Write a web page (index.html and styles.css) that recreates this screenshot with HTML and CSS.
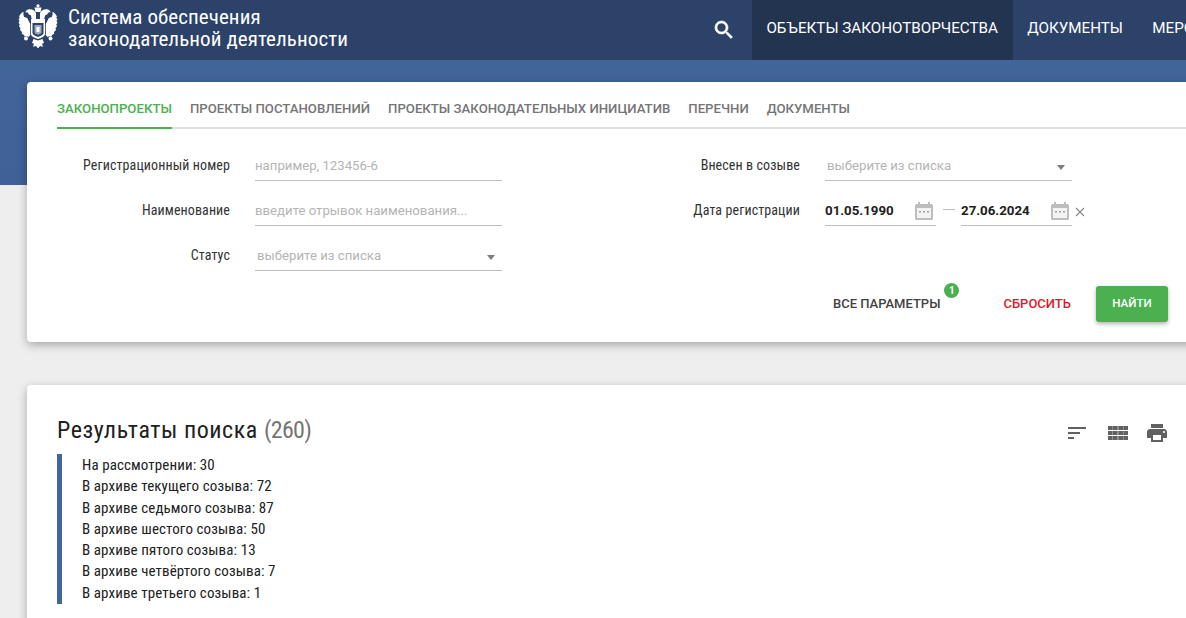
FILE: index.html
```html
<!DOCTYPE html>
<html lang="ru">
<head>
<meta charset="utf-8">
<title>Система обеспечения законодательной деятельности</title>
<link rel="stylesheet" href="styles.css">
</head>
<body>
<header class="topbar">
  <svg class="emblem" viewBox="0 0 40 44" width="40" height="44" fill="#fff">
    <circle cx="20" cy="1.8" r="1.6"/>
    <path d="M16.500 3.500h7l-1 4.500h-5z"/>
    <path d="M18 9c-1-3-5-4.500-8-3.500-1.500.5-2.500 1.800-2.500 3 1.200-.6 2.200-.3 2.500.5.500 1.500 2 2 3 2.500l.5 3 4.500 2zM22 9c1-3 5-4.500 8-3.500 1.500.5 2.500 1.800 2.500 3-1.200-.6-2.200-.3-2.500.5-.5 1.500-2 2-3 2.500l-.5 3-4.500 2z"/>
    <path d="M5 8C3 9 1.500 11 1 13l1 1-1.500 1 1 2L.5 18.500l1.200 2-.7 1.700 1.500 2-.5 1.800 2 2-.2 1.800 2.200 1.200.5 1.500 2.500-.2 1.500.8 1.700-2.100V20l-3-6-3-1c-.7-1.500-1.200-3.500-.5-5zM35 8c2 1 3.500 3 4 5l-1 1 1.500 1-1 2 1 1.500-1.200 2 .7 1.700-1.500 2 .5 1.800-2 2 .2 1.800-2.200 1.200-.5 1.500-2.500-.2-1.500.8-1.700-2.100V20l3-6 3-1c.7-1.500 1.200-3.500.5-5z"/>
    <path d="M13 15h14v15c0 2-3 4-7 5-4-1-7-3-7-5z"/>
    <path d="M14.500 19h11v10c0 1.800-3 3-5.500 4-2.500-1-5.500-2.200-5.500-4z" fill="#2c4269"/>
    <path d="M16.500 21h7v7.500c0 1-2 1.800-3.500 2.300-1.500-.5-3.500-1.300-3.500-2.300z" fill="#9fabc0"/>
    <path d="M18.500 23h3v5h-3z" fill="#fff"/>
    <circle cx="8" cy="34.500" r="2"/><circle cx="32.500" cy="34.500" r="2"/>
    <path d="M15.500 35l4.500 1.500 4.500-1.500 1.500 4-2 .8 1 3-3-.8-2 2.500-2-2.500-3 .8 1-3-2-.8z"/>
  </svg>
  <div class="brand">Система обеспечения<br>законодательной деятельности</div>
  <button class="search-btn" aria-label="Поиск">
    <svg class="search-icon" viewBox="0 0 24 24" width="24" height="24"><path d="M15.500 14h-.79l-.28-.27C15.410 12.590 16 11.110 16 9.500 16 5.910 13.090 3 9.500 3S3 5.910 3 9.500 5.910 16 9.500 16c1.610 0 3.090-.59 4.230-1.570l.27.28v.79l5 4.990L20.490 19l-4.990-5zm-6 0C7.010 14 5 11.990 5 9.500S7.010 5 9.500 5 14 7.010 14 9.500 11.990 14 9.500 14z"/></svg>
  </button>
  <nav class="mainnav">
    <a class="mainnav-item active">ОБЪЕКТЫ ЗАКОНОТВОРЧЕСТВА</a>
    <a class="mainnav-item">ДОКУМЕНТЫ</a>
    <a class="mainnav-item">МЕРОПРИЯТИЯ</a>
  </nav>
</header>

<div class="band"></div>

<main class="content">
  <section class="card search-card">
    <div class="tabs">
      <a class="tab active">ЗАКОНОПРОЕКТЫ</a>
      <a class="tab">ПРОЕКТЫ ПОСТАНОВЛЕНИЙ</a>
      <a class="tab">ПРОЕКТЫ ЗАКОНОДАТЕЛЬНЫХ ИНИЦИАТИВ</a>
      <a class="tab">ПЕРЕЧНИ</a>
      <a class="tab">ДОКУМЕНТЫ</a>
    </div>
    <div class="form">
      <div class="form-col">
        <div class="field">
          <label class="field-label">Регистрационный номер</label>
          <div class="control"><span class="placeholder">например, 123456-6</span></div>
        </div>
        <div class="field">
          <label class="field-label">Наименование</label>
          <div class="control"><span class="placeholder">введите отрывок наименования...</span></div>
        </div>
        <div class="field">
          <label class="field-label">Статус</label>
          <div class="control select"><span class="placeholder">выберите из списка</span><i class="caret"></i></div>
        </div>
      </div>
      <div class="form-col">
        <div class="field">
          <label class="field-label">Внесен в созыве</label>
          <div class="control select"><span class="placeholder">выберите из списка</span><i class="caret"></i></div>
        </div>
        <div class="field">
          <label class="field-label">Дата регистрации</label>
          <div class="dates">
            <div class="control date"><span class="date-value">01.05.1990</span>
              <svg class="cal" viewBox="0 0 18 18" width="18" height="18"><path fill="#bdbdbd" d="M3 0h2v2h8V0h2v2h1.500A1.500 1.500 0 0 1 18 3.500v13a1.500 1.500 0 0 1-1.500 1.500h-15A1.500 1.500 0 0 1 0 16.500v-13A1.500 1.500 0 0 1 1.500 2H3z"/><rect x="2" y="6" width="14" height="10" fill="#f3f3f3"/><path fill="#9e9e9e" d="M4 9h2v1.500H4zM8 9h2v1.500H8zM12 9h2v1.500h-2z"/></svg>
            </div>
            <span class="dash"></span>
            <div class="control date"><span class="date-value">27.06.2024</span>
              <svg class="cal" viewBox="0 0 18 18" width="18" height="18"><path fill="#bdbdbd" d="M3 0h2v2h8V0h2v2h1.500A1.500 1.500 0 0 1 18 3.500v13a1.500 1.500 0 0 1-1.500 1.500h-15A1.500 1.500 0 0 1 0 16.500v-13A1.500 1.500 0 0 1 1.500 2H3z"/><rect x="2" y="6" width="14" height="10" fill="#f3f3f3"/><path fill="#9e9e9e" d="M4 9h2v1.500H4zM8 9h2v1.500H8zM12 9h2v1.500h-2z"/></svg>
            </div>
            <svg class="clear" viewBox="0 0 10 10" width="10" height="10"><path d="M1 1l8 8M9 1L1 9" stroke="#8a8a8a" stroke-width="1.200" fill="none"/></svg>
          </div>
        </div>
      </div>
    </div>
    <div class="actions">
      <button class="btn-text more">ВСЕ ПАРАМЕТРЫ<span class="badge">1</span></button>
      <button class="btn-text reset">СБРОСИТЬ</button>
      <button class="btn-find">НАЙТИ</button>
    </div>
  </section>

  <section class="card results-card">
    <div class="results-head">
      <h2 class="results-title">Результаты поиска <span class="count">(260)</span></h2>
      <div class="tools">
        <svg viewBox="0 0 24 24" width="24" height="24" fill="#616161"><path d="M3 18h6v-2H3v2zM3 6v2h18V6H3zm0 7h12v-2H3v2z"/></svg>
        <svg viewBox="0 0 20 14" width="20" height="14" fill="#616161" class="tool-table"><path d="M0 0h4.700v4H0zM5 0h4.700v4H5zM10.300 0H15v4h-4.700zM15.300 0H20v4h-4.700zM0 5h4.700v4H0zM5 5h4.700v4H5zM10.300 5H15v4h-4.700zM15.300 5H20v4h-4.700zM0 10h4.700v4H0zM5 10h4.700v4H5zM10.300 10H15v4h-4.700zM15.300 10H20v4h-4.700z"/></svg>
        <svg viewBox="0 0 24 24" width="24" height="24" fill="#616161"><path d="M19 8H5c-1.660 0-3 1.340-3 3v6h4v4h12v-4h4v-6c0-1.660-1.340-3-3-3zm-3 11H8v-5h8v5zm3-7c-.55 0-1-.45-1-1s.45-1 1-1 1 .45 1 1-.45 1-1 1zm-1-9H6v4h12V3z"/></svg>
      </div>
    </div>
    <ul class="stats">
      <li>На рассмотрении: 30</li>
      <li>В архиве текущего созыва: 72</li>
      <li>В архиве седьмого созыва: 87</li>
      <li>В архиве шестого созыва: 50</li>
      <li>В архиве пятого созыва: 13</li>
      <li>В архиве четвёртого созыва: 7</li>
      <li>В архиве третьего созыва: 1</li>
    </ul>
  </section>
</main>
</body>
</html>
```
FILE: styles.css
```css
* { box-sizing: border-box; }
html, body { margin: 0; height: 618px; overflow: hidden; }
body {
  background: #eeeeee;
  font-family: Roboto, "Noto Sans", sans-serif;
  color: #212121;
  position: relative;
}
.topbar {
  height: 60px;
  background: #2c4269;
  display: flex;
  align-items: center;
  padding-left: 18px;
  position: relative;
  z-index: 2;
}
.emblem { flex: none; align-self: flex-start; margin-top: 4px; }
.brand {
  margin-left: 10px;
  margin-top: -4px;
  color: #fff;
  font-size: 21px;
  line-height: 22px;
  letter-spacing: .09px;
  font-stretch: 75%;
  white-space: nowrap;
}
.search-btn {
  margin-left: auto;
  margin-right: 4px;
  flex: none;
  width: 48px;
  height: 60px;
  padding: 0;
  border: 0;
  background: none;
  display: flex;
  align-items: center;
  justify-content: center;
}
.search-icon { fill: #fff; stroke: #fff; stroke-width: .6; }
.mainnav { flex: none; width: 434px; display: flex; height: 60px; overflow: hidden; }
.mainnav-item {
  flex: none;
  padding: 0 14.9px 0 14.4px;
  line-height: 56px;
  color: #fff;
  font-size: 15.2px;
  white-space: nowrap;
}
.mainnav-item.active { background: #233451; }
.band {
  position: absolute;
  left: 0;
  right: 0;
  top: 60px;
  height: 125px;
  background: linear-gradient(#416499, #3f6197);
}
.content {
  position: relative;
  height: 558px;
  overflow: hidden;
  padding: 22px 0 0 27px;
  width: 1200px;
}
.card {
  background: #fff;
  border-radius: 4px;
  box-shadow: 0 3px 10px rgba(0,0,0,.3);
  padding-left: 30px;
}
.search-card { height: 260px; padding-right: 32px; }
.tabs {
  display: flex;
  gap: 18px;
  height: 47px;
  margin-right: -32px;
  border-bottom: 2px solid #e0e0e0;
}
.tab {
  font-weight: 500;
  font-size: 13.2px;
  line-height: 53px;
  height: 47px;
  color: #757575;
  white-space: nowrap;
}
.tab.active { color: #4caf50; border-bottom: 2px solid #4caf50; }
.form { display: flex; padding-top: 17px; }
.form-col { flex: none; width: 570px; display: flex; flex-direction: column; }
.form-col + .form-col { width: 541px; }
.field { display: flex; height: 45px; align-items: flex-start; }
.field-label {
  width: 173px;
  margin-right: 25px;
  text-align: right;
  font-size: 14px;
  font-stretch: 75%;
  letter-spacing: .1px;
  line-height: 39px;
  color: #333;
  white-space: nowrap;
}
.control {
  width: 247px;
  height: 35px;
  border-bottom: 1px solid #bdbdbd;
  font-size: 13.2px;
  line-height: 39px;
  position: relative;
  display: flex;
  align-items: flex-start;
}
.placeholder { color: #b4b4b4; }
.select .placeholder { margin-left: 2px; }
.caret {
  margin: 19px 7px 0 auto;
  border: 4.5px solid transparent;
  border-top: 5px solid #7d7d7d;
  border-bottom: 0;
  width: 0;
  height: 0;
}
.dates { display: flex; align-items: flex-start; flex: none; }
.date { width: 111px; justify-content: space-between; }
.date-value { font-weight: 700; font-size: 13.3px; color: #212121; }
.cal { margin: 11px 3px 0 0; flex: none; }
.dash { width: 12px; height: 1px; margin: 18px 6px 0 7px; background: #bdbdbd; }
.clear { margin: 16px 0 0 3px; flex: none; }
.actions {
  display: flex;
  justify-content: flex-end;
  align-items: center;
  margin-top: 5px;
}
.btn-text {
  border: 0;
  background: none;
  padding: 0 0 2px;
  font: 500 13px Roboto, sans-serif;
  white-space: nowrap;
}
.more { color: #424242; position: relative; margin-right: 63px; }
.badge {
  position: absolute;
  right: -19px;
  top: -13px;
  width: 15px;
  height: 15px;
  line-height: 15px;
  border-radius: 50%;
  background: #4caf50;
  color: #fff;
  font-size: 10px;
  font-weight: 700;
  text-align: center;
}
.reset { color: #e3162b; margin-right: 25px; }
.btn-find {
  width: 72px;
  height: 36px;
  padding: 0 0 2px;
  border: 0;
  border-radius: 3px;
  background: #4caf50;
  color: #fff;
  font: 500 11.6px Roboto, sans-serif;
  box-shadow: 0 2px 4px rgba(0,0,0,.3);
}
.results-card { margin-top: 43px; height: 260px; padding-top: 30px; }
.results-head {
  display: flex;
  justify-content: space-between;
  height: 39px;
  padding-right: 31px;
}
.results-title {
  margin: 0;
  font-weight: 400;
  font-size: 24px;
  line-height: 30px;
  letter-spacing: .55px;
  font-stretch: 75%;
  color: #212121;
  white-space: nowrap;
}
.count { color: #757575; letter-spacing: -.7px; }
.tools { display: flex; align-items: flex-start; padding-top: 6px; }
.tools svg { margin-left: 18px; flex: none; }
.tools .tool-table { margin: 5px -1px 0 19px; }
.stats {
  list-style: none;
  margin: 0;
  padding: 1px 0 0 20px;
  border-left: 5px solid #45659a;
  font-size: 15px;
  line-height: 21.3px;
  letter-spacing: .1px;
  font-stretch: 75%;
  color: #212121;
}
```
